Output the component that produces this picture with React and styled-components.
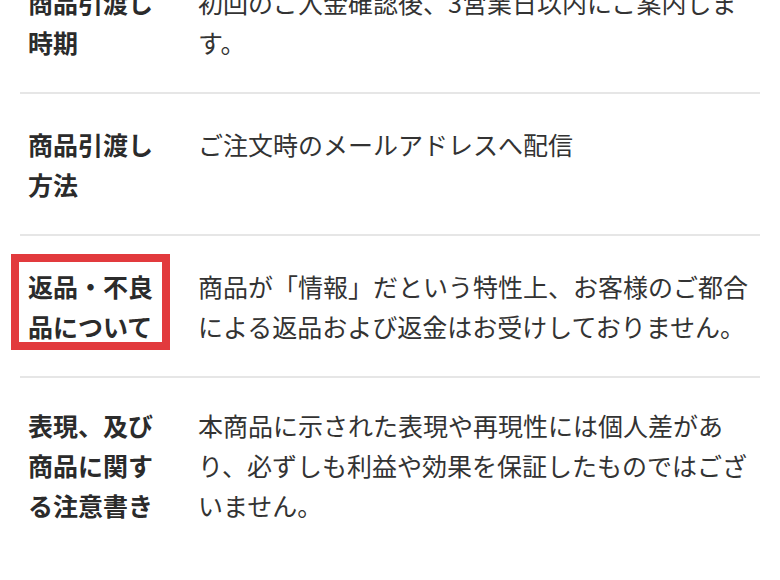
import styled, { createGlobalStyle } from "styled-components";

const GlobalStyle = createGlobalStyle`
  html, body {
    margin: 0;
    padding: 0;
    background: #fff;
    overflow: hidden;
  }
  body {
    font-family: "Noto Sans CJK JP", "Noto Sans", sans-serif;
    color: #333;
  }
`;

const Wrapper = styled.div`
  width: 740px;
  padding: 0 20px;
  margin-top: -48px;
`;

const Row = styled.div`
  display: grid;
  grid-template-columns: 140px 1fr;
  column-gap: 30px;
  padding: ${(p) => p.$pad || "30px"} 0 30px 8px;
  border-bottom: ${(p) => (p.$last ? "none" : "2px solid #e6e6e6")};
  font-size: 25px;
  line-height: 40px;
`;

const Label = styled.div`
  font-weight: 700;
  color: #2b2b2b;
`;

// red annotation frame drawn over the label
const Marked = styled.span`
  position: relative;
  display: inline-block;

  &::after {
    content: "";
    position: absolute;
    left: -17px;
    top: -12px;
    width: 159px;
    height: 96px;
    box-sizing: border-box;
    border: 8px solid #e23a3d;
    pointer-events: none;
  }
`;

const Value = styled.div`
  font-weight: 400;
  color: #333;
`;

const rows = [
  {
    label: "商品引渡し時期",
    value: "初回のご入金確認後、3営業日以内にご案内します。",
  },
  {
    label: "商品引渡し方法",
    value: "ご注文時のメールアドレスへ配信",
  },
  {
    label: "返品・不良品について",
    value:
      "商品が「情報」だという特性上、お客様のご都合による返品および返金はお受けしておりません。",
    marked: true,
  },
  {
    label: "表現、及び商品に関する注意書き",
    value:
      "本商品に示された表現や再現性には個人差があり、必ずしも利益や効果を保証したものではございません。",
    pad: "27px",
    last: true,
  },
];

const App = () => {
  return (
    <>
      <GlobalStyle />
      <Wrapper>
        {rows.map((r) => (
          <Row key={r.label} $pad={r.pad} $last={r.last}>
            <Label>{r.marked ? <Marked>{r.label}</Marked> : r.label}</Label>
            <Value>{r.value}</Value>
          </Row>
        ))}
      </Wrapper>
    </>
  );
};

export default App;
